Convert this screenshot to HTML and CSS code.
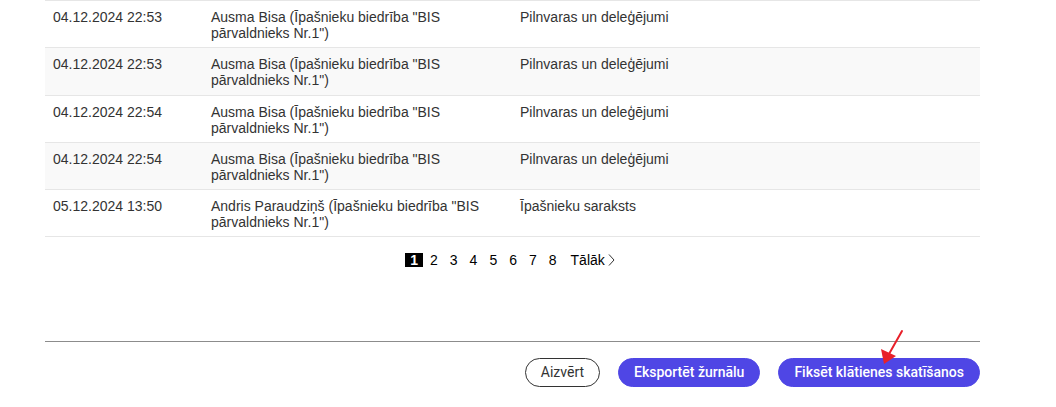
FILE: index.html
```html
<!DOCTYPE html>
<html lang="lv">
<head>
<meta charset="utf-8">
<title>Žurnāls</title>
<link rel="stylesheet" href="styles.css">
</head>
<body>
<div class="wrap">
  <table class="log">
    <colgroup>
      <col class="c-date">
      <col class="c-user">
      <col>
    </colgroup>
    <tbody>
      <tr><td>04.12.2024 22:53</td><td>Ausma Bisa (Īpašnieku biedrība "BIS pārvaldnieks Nr.1")</td><td>Pilnvaras un deleģējumi</td></tr>
      <tr class="alt"><td>04.12.2024 22:53</td><td>Ausma Bisa (Īpašnieku biedrība "BIS pārvaldnieks Nr.1")</td><td>Pilnvaras un deleģējumi</td></tr>
      <tr><td>04.12.2024 22:54</td><td>Ausma Bisa (Īpašnieku biedrība "BIS pārvaldnieks Nr.1")</td><td>Pilnvaras un deleģējumi</td></tr>
      <tr class="alt"><td>04.12.2024 22:54</td><td>Ausma Bisa (Īpašnieku biedrība "BIS pārvaldnieks Nr.1")</td><td>Pilnvaras un deleģējumi</td></tr>
      <tr><td>05.12.2024 13:50</td><td>Andris Paraudziņš (Īpašnieku biedrība "BIS pārvaldnieks Nr.1")</td><td>Īpašnieku saraksts</td></tr>
    </tbody>
  </table>

  <nav class="pager">
    <span class="pg current">1</span>
    <a class="pg">2</a>
    <a class="pg">3</a>
    <a class="pg">4</a>
    <a class="pg">5</a>
    <a class="pg">6</a>
    <a class="pg">7</a>
    <a class="pg">8</a>
    <a class="pg next">Tālāk<svg class="chev" width="7" height="12" viewBox="0 0 7 12"><path d="M1 0.5 L6 6 L1 11.5" fill="none" stroke="#333" stroke-width="1"/></svg></a>
  </nav>

  <div class="footer">
    <button class="btn btn-outline">Aizvērt</button>
    <button class="btn btn-primary">Eksportēt žurnālu</button>
    <button class="btn btn-primary">Fiksēt klātienes skatīšanos</button>
  </div>
</div>

<svg class="annot" width="40" height="44" viewBox="876 326 40 44">
  <line x1="902" y1="331" x2="889" y2="354" stroke="#e8202a" stroke-width="2" stroke-linecap="round"/>
  <polygon points="884,364 881,349 896,356" fill="#e8202a"/>
</svg>
</body>
</html>
```

FILE: styles.css
```css
html, body {
  margin: 0;
  padding: 0;
  background: #ffffff;
}

.wrap {
  padding: 0 76px 0 45px;
  font-family: "Liberation Sans", Arial, sans-serif;
  font-size: 14px;
  color: #333333;
}

.log {
  width: 100%;
  border-collapse: collapse;
  table-layout: fixed;
}

.c-date { width: 158px; }
.c-user { width: 309px; }

.log tr {
  border-top: 1px solid #e6e6e6;
}

.log tr:last-child {
  border-bottom: 1px solid #e6e6e6;
}

.log tr.alt {
  background: #f9f9f9;
}

.log td {
  padding: 8px 8px 6.25px;
  line-height: 16px;
  vertical-align: top;
}

.pager {
  display: flex;
  justify-content: center;
  align-items: center;
  margin-top: 16px;
  height: 14px;
  color: #000000;
}

.pg {
  display: inline-flex;
  align-items: center;
  height: 14px;
  line-height: 14px;
  padding: 0 5px;
  margin: 0 1px;
  color: #000000;
  cursor: pointer;
}

.pg.current {
  background: #000000;
  color: #ffffff;
  font-weight: 700;
}

.pg.next {
  margin-left: 3px;
}

.chev {
  margin-left: 3px;
}

.footer {
  margin-top: 74px;
  border-top: 1px solid #8c8c8c;
  padding-top: 16px;
  display: flex;
  justify-content: flex-end;
  gap: 18px;
}

.btn {
  font-family: Roboto, "Liberation Sans", sans-serif;
  font-size: 14px;
  height: 29px;
  border-radius: 15px;
  padding: 0 15px;
  cursor: pointer;
  line-height: 27px;
}

.btn-outline {
  background: #ffffff;
  border: 1px solid #333333;
  color: #333333;
  font-weight: 400;
}

.btn-primary {
  background: #4f46e5;
  border: 1px solid #4f46e5;
  color: #ffffff;
  font-weight: 500;
}

.annot {
  position: absolute;
  left: 876px;
  top: 326px;
}
```
